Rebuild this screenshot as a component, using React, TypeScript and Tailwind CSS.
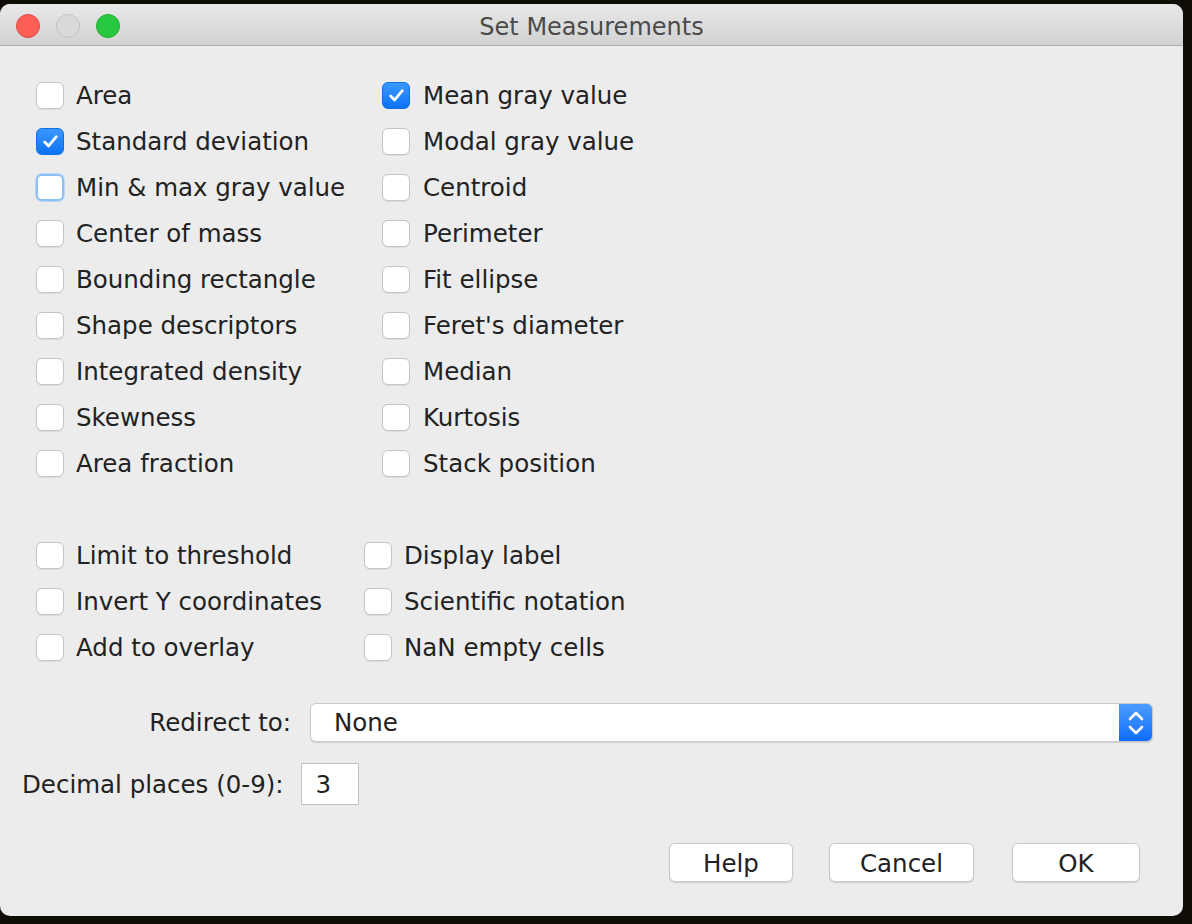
import React from "react";

const font = { fontFamily: '"DejaVu Sans", "Liberation Sans", sans-serif' };

function Box({ checked, focus }: { checked?: boolean; focus?: boolean }) {
  if (checked) {
    return (
      <div className="w-[28px] h-[27px] rounded-[6px] bg-gradient-to-b from-[#3a98ff] to-[#0a72f5] border border-[#0e6fe6] flex items-center justify-center shrink-0">
        <svg width="17" height="15" viewBox="0 0 16 14">
          <path d="M2.5 7.5 L6.2 11.2 L13.5 2.5" fill="none" stroke="white" strokeWidth="2.6" strokeLinecap="round" strokeLinejoin="round" />
        </svg>
      </div>
    );
  }
  return (
    <div
      className={
        "w-[28px] h-[27px] rounded-[6px] bg-white shrink-0 " +
        (focus
          ? "border-2 border-[#8ec0f6] shadow-[0_0_0_1px_#b9d8fa]"
          : "border border-[#c4c4c4] shadow-[0_1px_0_rgba(0,0,0,0.06)]")
      }
    />
  );
}

function Item({ label, checked, focus, gap = "gap-3" }: { label: string; checked?: boolean; focus?: boolean; gap?: string }) {
  return (
    <div className={"h-[46px] flex items-center " + gap}>
      <Box checked={checked} focus={focus} />
      <span className="text-[24.5px] text-[#222] whitespace-nowrap leading-none pt-[2px]">{label}</span>
    </div>
  );
}

export default function App() {
  const left1 = [
    ["Area", false],
    ["Standard deviation", true],
    ["Min & max gray value", false],
    ["Center of mass", false],
    ["Bounding rectangle", false],
    ["Shape descriptors", false],
    ["Integrated density", false],
    ["Skewness", false],
    ["Area fraction", false],
  ] as const;
  const right1 = [
    ["Mean gray value", true],
    ["Modal gray value", false],
    ["Centroid", false],
    ["Perimeter", false],
    ["Fit ellipse", false],
    ["Feret's diameter", false],
    ["Median", false],
    ["Kurtosis", false],
    ["Stack position", false],
  ] as const;
  return (
    <div className="w-[1192px] h-[924px] bg-[#100d07] pt-[4px]" style={font}>
      <div className="w-[1183px] h-[912px] rounded-[10px] bg-[#ececec] overflow-hidden flex flex-col">
        {/* title bar */}
        <div className="h-[42px] shrink-0 bg-gradient-to-b from-[#e8e8e8] to-[#d2d2d2] border-b border-[#b1b1b1] flex items-center relative pt-[3px]">
          <div className="flex items-center gap-[16px] pl-[16px]">
            <div className="w-[24px] h-[24px] rounded-full bg-[#fd5f57] border border-[#e2463f]" />
            <div className="w-[24px] h-[24px] rounded-full bg-[#d9d9d9] border border-[#c2c2c2]" />
            <div className="w-[24px] h-[24px] rounded-full bg-[#28c840] border border-[#1eac2e]" />
          </div>
          <div className="absolute inset-0 pt-[4px] flex items-center justify-center text-[24px] text-[#4b4b4b] pointer-events-none">
            Set Measurements
          </div>
        </div>

        {/* content */}
        <div className="flex-1 pt-[26px]">
          <div className="flex pl-[36px]">
            <div className="w-[346px] flex flex-col">
              {left1.map(([l, c], i) => (
                <Item key={l} label={l} checked={c} focus={i === 2} />
              ))}
            </div>
            <div className="flex flex-col">
              {right1.map(([l, c]) => (
                <Item key={l} label={l} checked={c} gap="gap-[13px]" />
              ))}
            </div>
          </div>

          <div className="flex pl-[36px] mt-[46px]">
            <div className="w-[328px] flex flex-col">
              <Item label="Limit to threshold" />
              <Item label="Invert Y coordinates" />
              <Item label="Add to overlay" />
            </div>
            <div className="flex flex-col">
              <Item label="Display label" />
              <Item label="Scientific notation" />
              <Item label="NaN empty cells" />
            </div>
          </div>

          <div className="flex items-center mt-[33px] h-[39px]">
            <div className="w-[292px] text-right pr-[1px] pt-[2px] text-[24.5px] text-[#222] leading-none whitespace-nowrap">Redirect to:</div>
            <div className="ml-[18px] w-[843px] h-[39px] rounded-[6px] bg-white border border-[#c8c8c8] shadow-[0_1px_1px_rgba(0,0,0,0.12)] flex items-center overflow-hidden">
              <span className="pl-[23px] pt-[2px] flex-1 text-[24.5px] text-[#222] leading-none">None</span>
              <div className="w-[33px] h-full bg-gradient-to-b from-[#4a9dff] to-[#0a6cfa] flex items-center justify-center">
                <svg width="18" height="28" viewBox="0 0 18 28">
                  <path d="M3 10 L9 4 L15 10" fill="none" stroke="white" strokeWidth="2.6" strokeLinecap="round" strokeLinejoin="round" />
                  <path d="M3 18 L9 24 L15 18" fill="none" stroke="white" strokeWidth="2.6" strokeLinecap="round" strokeLinejoin="round" />
                </svg>
              </div>
            </div>
          </div>

          <div className="flex items-center mt-[21px] h-[42px] pl-[22px]">
            <span className="text-[24.5px] pt-[2px] text-[#222] leading-none whitespace-nowrap">Decimal places (0-9):</span>
            <div className="ml-[17px] w-[58px] h-[42px] bg-white border border-[#c3c3c3] flex items-center pl-[14px] pt-[2px] text-[24.5px] text-[#222] leading-none">
              3
            </div>
          </div>

          <div className="flex justify-end items-center mt-[38px] pr-[43px] gap-[36px]">
            <button className="w-[124px] h-[39px] pt-[3px] rounded-[6px] bg-white border border-[#c8c8c8] shadow-[0_1px_1px_rgba(0,0,0,0.12)] text-[24.5px] text-[#222] leading-none">Help</button>
            <button className="w-[145px] h-[39px] pt-[3px] rounded-[6px] bg-white border border-[#c8c8c8] shadow-[0_1px_1px_rgba(0,0,0,0.12)] text-[24.5px] text-[#222] leading-none">Cancel</button>
            <button className="w-[128px] h-[39px] pt-[3px] rounded-[6px] bg-white border border-[#c8c8c8] shadow-[0_1px_1px_rgba(0,0,0,0.12)] text-[24.5px] text-[#222] leading-none ml-[2px]">OK</button>
          </div>
        </div>
      </div>
    </div>
  );
}
